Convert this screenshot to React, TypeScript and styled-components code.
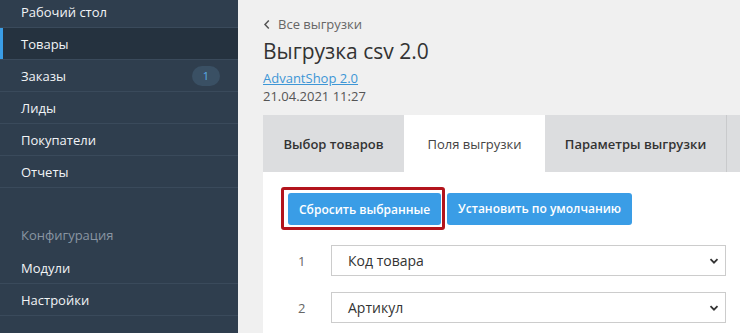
import React, {FunctionComponent} from 'react';
import styled, {createGlobalStyle} from 'styled-components';

const GlobalStyle = createGlobalStyle`
    html, body {
        margin: 0;
        padding: 0;
        height: 100%;
        overflow: hidden;
    }
    body {
        font-family: "Open Sans", "Noto Sans", sans-serif;
        background: #f0f0f0;
    }
`;

const Layout = styled.div`
    display: flex;
    height: 333px;
    overflow: hidden;
`;

const Sidebar = styled.nav`
    width: 238px;
    flex-shrink: 0;
    background: #2f3e4e;
`;

const MenuList = styled.ul`
    list-style: none;
    margin: -4px 0 0;
    padding: 0;
`;

const MenuItem = styled.li<{active?: boolean}>`
    display: flex;
    align-items: center;
    justify-content: space-between;
    height: 31px;
    padding: 0 18px 0 21px;
    border-bottom: 1px solid #3a4a5b;
    background: ${p => p.active ? '#25323f' : 'transparent'};
    box-shadow: ${p => p.active ? 'inset 3px 0 0 #3a9de6' : 'none'};
    color: #f2f4f6;
    font-size: 13px;
`;

const MenuHeader = styled.li`
    display: flex;
    align-items: flex-end;
    height: 56px;
    padding: 0 0 8px 21px;
    color: #8995a2;
    font-size: 13px;
`;

const Badge = styled.span`
    display: inline-flex;
    align-items: center;
    justify-content: center;
    width: 28px;
    height: 20px;
    border-radius: 10px;
    background: #3a5064;
    color: #5aaee8;
    font-size: 11px;
`;

const Main = styled.main`
    flex: 1;
    display: flex;
    flex-direction: column;
    padding: 15px 0 0 25px;
    min-width: 0;
`;

const BackLink = styled.a`
    display: flex;
    align-items: center;
    gap: 7px;
    color: #666;
    font-size: 13px;
    text-decoration: none;
    height: 18px;
`;

const Title = styled.h1`
    margin: 4px 0 0;
    font-size: 21px;
    font-weight: 400;
    color: #333;
    line-height: 28px;
`;

const ProjectLink = styled.a`
    display: block;
    margin-top: 4px;
    color: #3d96d6;
    font-size: 13px;
    text-decoration: underline;
    line-height: 18px;
`;

const DateText = styled.div`
    color: #555;
    font-size: 13px;
    line-height: 18px;
`;

const Tabs = styled.div`
    display: flex;
    margin-top: 10px;
    height: 57px;
    background: #dcdddf;
`;

const Tab = styled.div<{active?: boolean; divider?: boolean; width: number}>`
    display: flex;
    align-items: center;
    justify-content: center;
    width: ${p => p.width}px;
    flex-shrink: 0;
    background: ${p => p.active ? '#ffffff' : '#dcdddf'};
    color: ${p => p.active ? '#444' : '#333'};
    font-size: 13px;
    font-weight: ${p => p.active ? 400 : 600};
    border-right: ${p => p.divider ? '1px solid #c9cacc' : 'none'};
`;

const Panel = styled.section`
    flex: 1;
    background: #fff;
    padding: 15px 0 0 18px;
`;

const Toolbar = styled.div`
    display: flex;
    align-items: center;
    gap: 2px;
`;

const Highlight = styled.div`
    display: flex;
    padding: 3px 1px 2px 4px;
    border: 3px solid #b3141c;
    border-radius: 3px;
`;

const Button = styled.button`
    height: 32px;
    padding: 0 11px;
    border: none;
    border-radius: 3px;
    background: #3a9de6;
    color: #fff;
    font-family: inherit;
    font-size: 12px;
    font-weight: 600;
`;

const FieldRows = styled.div`
    display: flex;
    flex-direction: column;
    gap: 16px;
    margin-top: 15px;
    padding-left: 7px;
`;

const FieldRow = styled.div`
    display: flex;
    align-items: center;
`;

const RowNumber = styled.span`
    width: 43px;
    padding-left: 10px;
    box-sizing: border-box;
    color: #666;
    font-size: 13px;
`;

const Select = styled.div`
    display: flex;
    align-items: center;
    justify-content: space-between;
    width: 395px;
    height: 31px;
    box-sizing: border-box;
    padding: 0 6px 0 16px;
    border: 1px solid #cccccc;
    color: #333;
    font-size: 14px;
`;

const Chevron: FunctionComponent = () => (
    <svg width="10" height="10" viewBox="0 0 10 10">
        <path d="M1.5 3.2 L5 6.7 L8.5 3.2" fill="none" stroke="#333" strokeWidth="1.8"/>
    </svg>
);

const BackArrow: FunctionComponent = () => (
    <svg width="8" height="11" viewBox="0 0 8 11">
        <path d="M5.8 1.5 L2 5.5 L5.8 9.5" fill="none" stroke="#555" strokeWidth="1.5"/>
    </svg>
);

const menu = [
    {title: 'Рабочий стол'},
    {title: 'Товары', active: true},
    {title: 'Заказы', badge: 1},
    {title: 'Лиды'},
    {title: 'Покупатели'},
    {title: 'Отчеты'},
];

const fields = ['Код товара', 'Артикул'];

const App: FunctionComponent<{}> = () => {
    return (
        <>
            <GlobalStyle/>
            <Layout>
                <Sidebar>
                    <MenuList>
                        {menu.map(item => (
                            <MenuItem key={item.title} active={item.active}>
                                {item.title}
                                {item.badge && <Badge>{item.badge}</Badge>}
                            </MenuItem>
                        ))}
                        <MenuHeader>Конфигурация</MenuHeader>
                        <MenuItem>Модули</MenuItem>
                        <MenuItem>Настройки</MenuItem>
                    </MenuList>
                </Sidebar>
                <Main>
                    <BackLink href="#"><BackArrow/>Все выгрузки</BackLink>
                    <Title>Выгрузка csv 2.0</Title>
                    <ProjectLink href="#">AdvantShop 2.0</ProjectLink>
                    <DateText>21.04.2021 11:27</DateText>
                    <Tabs>
                        <Tab width={141}>Выбор товаров</Tab>
                        <Tab width={141} active>Поля выгрузки</Tab>
                        <Tab width={181} divider>Параметры выгрузки</Tab>
                    </Tabs>
                    <Panel>
                        <Toolbar>
                            <Highlight>
                                <Button>Сбросить выбранные</Button>
                            </Highlight>
                            <Button>Установить по умолчанию</Button>
                        </Toolbar>
                        <FieldRows>
                            {fields.map((f, i) => (
                                <FieldRow key={f}>
                                    <RowNumber>{i + 1}</RowNumber>
                                    <Select>{f}<Chevron/></Select>
                                </FieldRow>
                            ))}
                        </FieldRows>
                    </Panel>
                </Main>
            </Layout>
        </>
    )
};

export default App;
